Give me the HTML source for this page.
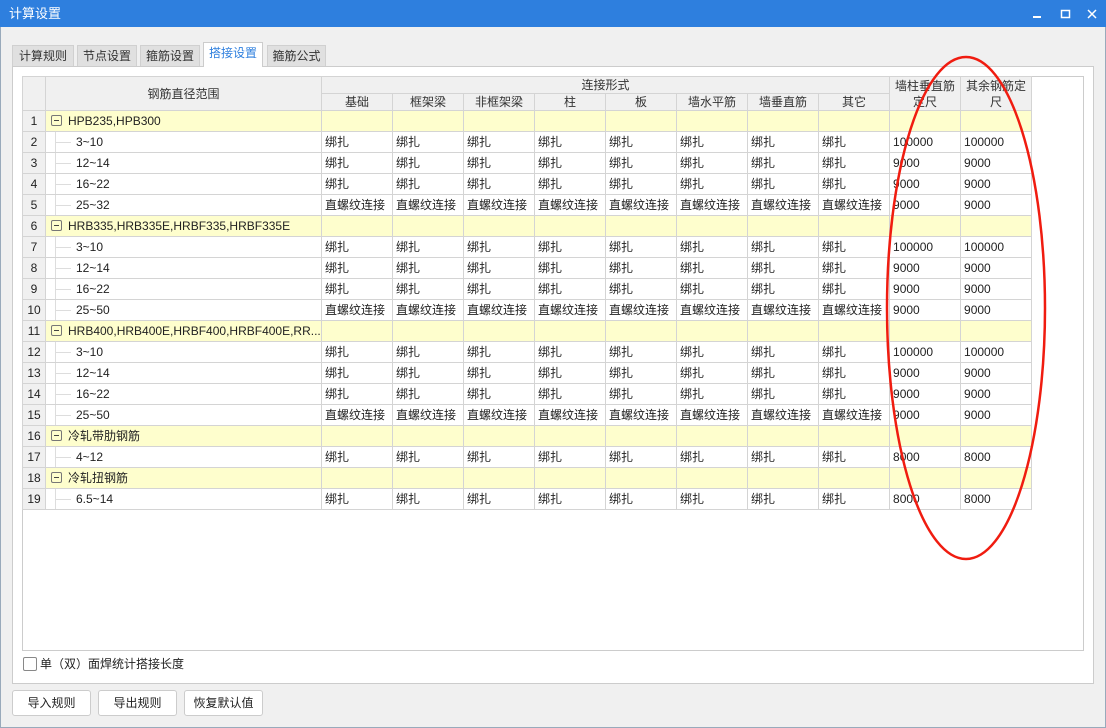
<!DOCTYPE html><html><head><meta charset="utf-8"><style>
*{margin:0;padding:0;box-sizing:border-box}
body{width:1106px;height:728px;background:#f0f0f0;font-family:"Liberation Sans","Noto Sans CJK SC",sans-serif;font-size:12px;color:#222;position:relative;overflow:hidden}
.frame{position:absolute;left:0;top:0;width:1106px;height:728px;border:1px solid #9ab}
.title{position:absolute;left:0;top:0;width:1106px;height:27px;background:#2e7fde;color:#fff;font-size:13px;line-height:27px;padding-left:9px}
.tab{position:absolute;top:45px;height:21px;background:#e0e0e0;border:1px solid #d0d0d0;border-bottom:none;line-height:20px;text-align:center;color:#333}
.tab.a{top:42px;height:25px;background:#fff;color:#2e7fde;border-color:#ccc}
.panel{position:absolute;left:12px;top:66px;width:1082px;height:618px;background:#fff;border:1px solid #ccc}
.grid{position:absolute;left:22px;top:76px;width:1062px;height:575px;border:1px solid #ccc;background:#fff}
table{border-collapse:collapse;table-layout:fixed;position:absolute;left:-1px;top:-1px;width:1009px}
td{border:1px solid #d4d4d4;height:21px;padding:0 3px;white-space:nowrap;overflow:hidden;line-height:20px}
.h td{background:#f0f0f0;text-align:center;height:17px;line-height:16px;color:#333}
td.n{background:#f0f0f0;text-align:center;padding:0}
tr.y td{background:#fefecd}
tr.y td.n{background:#f0f0f0}
.bx{display:inline-block;width:11px;height:11px;border:1px solid #777;border-radius:2px;vertical-align:-1px;margin:0 6px 0 2px;position:relative}
.bx:after{content:"";position:absolute;left:2px;top:4px;width:5px;height:1px;background:#444}
.ch{padding-left:30px;position:relative}
.ch:before{content:"";position:absolute;left:9px;top:0;bottom:0;border-left:1px solid #ddd}
.ch:after{content:"";position:absolute;left:9px;top:10px;width:16px;border-top:1px solid #ddd}
.btn{position:absolute;top:690px;height:26px;width:79px;background:#fff;border:1px solid #ccc;border-radius:3px;text-align:center;line-height:24px;color:#222}
</style></head><body>
<div class="frame"></div>
<div class="title">计算设置</div>
<svg style="position:absolute;left:1030px;top:6px" width="70" height="16"><rect x="3" y="10" width="8" height="2" fill="#fff"/><rect x="31.5" y="4.5" width="8" height="7" fill="none" stroke="#fff" stroke-width="1.5"/><path d="M58 4l8 8M66 4l-8 8" stroke="#fff" stroke-width="1.5"/></svg>
<div class="tab" style="left:12px;width:62px">计算规则</div>
<div class="tab" style="left:77px;width:60px">节点设置</div>
<div class="tab" style="left:140px;width:60px">箍筋设置</div>
<div class="tab" style="left:267px;width:59px">箍筋公式</div>
<div class="panel"></div>
<div class="tab a" style="left:203px;width:60px">搭接设置</div>
<div class="grid">
<table>
<colgroup><col style="width:23px"><col style="width:276px"><col span="10" style="width:71px"></colgroup>
<tr class="h"><td rowspan="2" class="n"></td><td rowspan="2">钢筋直径范围</td><td colspan="8">连接形式</td><td rowspan="2" style="line-height:16px">墙柱垂直筋<br>定尺</td><td rowspan="2">其余钢筋定<br>尺</td></tr>
<tr class="h"><td>基础</td><td>框架梁</td><td>非框架梁</td><td>柱</td><td>板</td><td>墙水平筋</td><td>墙垂直筋</td><td>其它</td></tr>
<tr class="y"><td class="n">1</td><td><span class="bx"></span>HPB235,HPB300</td><td></td><td></td><td></td><td></td><td></td><td></td><td></td><td></td><td></td><td></td></tr>
<tr><td class="n">2</td><td class="ch">3~10</td><td>绑扎</td><td>绑扎</td><td>绑扎</td><td>绑扎</td><td>绑扎</td><td>绑扎</td><td>绑扎</td><td>绑扎</td><td>100000</td><td>100000</td></tr>
<tr><td class="n">3</td><td class="ch">12~14</td><td>绑扎</td><td>绑扎</td><td>绑扎</td><td>绑扎</td><td>绑扎</td><td>绑扎</td><td>绑扎</td><td>绑扎</td><td>9000</td><td>9000</td></tr>
<tr><td class="n">4</td><td class="ch">16~22</td><td>绑扎</td><td>绑扎</td><td>绑扎</td><td>绑扎</td><td>绑扎</td><td>绑扎</td><td>绑扎</td><td>绑扎</td><td>9000</td><td>9000</td></tr>
<tr><td class="n">5</td><td class="ch">25~32</td><td>直螺纹连接</td><td>直螺纹连接</td><td>直螺纹连接</td><td>直螺纹连接</td><td>直螺纹连接</td><td>直螺纹连接</td><td>直螺纹连接</td><td>直螺纹连接</td><td>9000</td><td>9000</td></tr>
<tr class="y"><td class="n">6</td><td><span class="bx"></span>HRB335,HRB335E,HRBF335,HRBF335E</td><td></td><td></td><td></td><td></td><td></td><td></td><td></td><td></td><td></td><td></td></tr>
<tr><td class="n">7</td><td class="ch">3~10</td><td>绑扎</td><td>绑扎</td><td>绑扎</td><td>绑扎</td><td>绑扎</td><td>绑扎</td><td>绑扎</td><td>绑扎</td><td>100000</td><td>100000</td></tr>
<tr><td class="n">8</td><td class="ch">12~14</td><td>绑扎</td><td>绑扎</td><td>绑扎</td><td>绑扎</td><td>绑扎</td><td>绑扎</td><td>绑扎</td><td>绑扎</td><td>9000</td><td>9000</td></tr>
<tr><td class="n">9</td><td class="ch">16~22</td><td>绑扎</td><td>绑扎</td><td>绑扎</td><td>绑扎</td><td>绑扎</td><td>绑扎</td><td>绑扎</td><td>绑扎</td><td>9000</td><td>9000</td></tr>
<tr><td class="n">10</td><td class="ch">25~50</td><td>直螺纹连接</td><td>直螺纹连接</td><td>直螺纹连接</td><td>直螺纹连接</td><td>直螺纹连接</td><td>直螺纹连接</td><td>直螺纹连接</td><td>直螺纹连接</td><td>9000</td><td>9000</td></tr>
<tr class="y"><td class="n">11</td><td><span class="bx"></span>HRB400,HRB400E,HRBF400,HRBF400E,RR...</td><td></td><td></td><td></td><td></td><td></td><td></td><td></td><td></td><td></td><td></td></tr>
<tr><td class="n">12</td><td class="ch">3~10</td><td>绑扎</td><td>绑扎</td><td>绑扎</td><td>绑扎</td><td>绑扎</td><td>绑扎</td><td>绑扎</td><td>绑扎</td><td>100000</td><td>100000</td></tr>
<tr><td class="n">13</td><td class="ch">12~14</td><td>绑扎</td><td>绑扎</td><td>绑扎</td><td>绑扎</td><td>绑扎</td><td>绑扎</td><td>绑扎</td><td>绑扎</td><td>9000</td><td>9000</td></tr>
<tr><td class="n">14</td><td class="ch">16~22</td><td>绑扎</td><td>绑扎</td><td>绑扎</td><td>绑扎</td><td>绑扎</td><td>绑扎</td><td>绑扎</td><td>绑扎</td><td>9000</td><td>9000</td></tr>
<tr><td class="n">15</td><td class="ch">25~50</td><td>直螺纹连接</td><td>直螺纹连接</td><td>直螺纹连接</td><td>直螺纹连接</td><td>直螺纹连接</td><td>直螺纹连接</td><td>直螺纹连接</td><td>直螺纹连接</td><td>9000</td><td>9000</td></tr>
<tr class="y"><td class="n">16</td><td><span class="bx"></span>冷轧带肋钢筋</td><td></td><td></td><td></td><td></td><td></td><td></td><td></td><td></td><td></td><td></td></tr>
<tr><td class="n">17</td><td class="ch">4~12</td><td>绑扎</td><td>绑扎</td><td>绑扎</td><td>绑扎</td><td>绑扎</td><td>绑扎</td><td>绑扎</td><td>绑扎</td><td>8000</td><td>8000</td></tr>
<tr class="y"><td class="n">18</td><td><span class="bx"></span>冷轧扭钢筋</td><td></td><td></td><td></td><td></td><td></td><td></td><td></td><td></td><td></td><td></td></tr>
<tr><td class="n">19</td><td class="ch">6.5~14</td><td>绑扎</td><td>绑扎</td><td>绑扎</td><td>绑扎</td><td>绑扎</td><td>绑扎</td><td>绑扎</td><td>绑扎</td><td>8000</td><td>8000</td></tr>
</table>
</div>
<div style="position:absolute;left:23px;top:657px;width:14px;height:14px;border:1px solid #888;border-radius:2px;background:#fff"></div>
<div style="position:absolute;left:40px;top:656px;line-height:16px">单（双）面焊统计搭接长度</div>
<div class="btn" style="left:12px">导入规则</div>
<div class="btn" style="left:98px">导出规则</div>
<div class="btn" style="left:184px">恢复默认值</div>
<svg style="position:absolute;left:0;top:0" width="1106" height="728"><ellipse cx="966" cy="308" rx="79" ry="251" fill="none" stroke="#f01c10" stroke-width="2.5"/></svg>
</body></html>
